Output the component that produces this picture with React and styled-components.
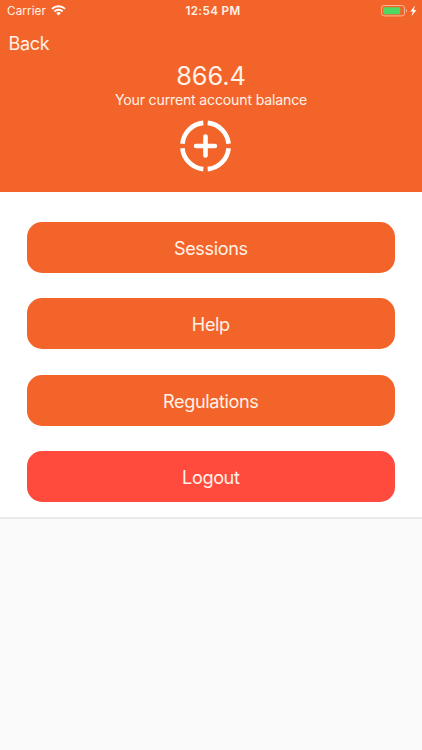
import React from 'react';
import styled, { createGlobalStyle } from 'styled-components';

const ORANGE = '#f3642b';
const RED = '#ff4b3e';

const GlobalStyle = createGlobalStyle`
  * {
    box-sizing: border-box;
  }
  body {
    margin: 0;
    background: #fafafa;
    font-family: Inter, Roboto, sans-serif;
  }
`;

const Screen = styled.div`
  width: 422px;
  height: 750px;
  overflow: hidden;
  background: #fafafa;
`;

const Header = styled.header`
  display: flex;
  flex-direction: column;
  height: 191.5px;
  background: ${ORANGE};
  color: #fff2e6;
`;

const StatusBar = styled.div`
  display: grid;
  grid-template-columns: 1fr auto 1fr;
  align-items: center;
  height: 22px;
  padding: 0 4px 0 7px;
`;

const Network = styled.div`
  display: flex;
  align-items: center;
  gap: 5px;
`;

const Carrier = styled.span`
  font-size: 11.7px;
  letter-spacing: 0.1px;
  line-height: 22px;
`;

const Clock = styled.span`
  padding-left: 1px;
  font-size: 11.6px;
  font-weight: 600;
  letter-spacing: 0.4px;
  line-height: 22px;
`;

const Power = styled.div`
  display: flex;
  align-items: center;
  justify-content: flex-end;
`;

const BackButton = styled.button`
  align-self: flex-start;
  height: 44px;
  padding: 0 8.5px;
  border: 0;
  background: none;
  color: inherit;
  font-family: inherit;
  font-size: 18px;
  letter-spacing: -0.3px;
  line-height: 44px;
`;

const Balance = styled.div`
  display: flex;
  flex-direction: column;
  align-items: center;
  margin-top: -5px;
`;

const Amount = styled.div`
  font-size: 25.4px;
  letter-spacing: -0.1px;
  line-height: 29px;
`;

const Caption = styled.div`
  padding-top: 2px;
  font-size: 14.1px;
  letter-spacing: -0.17px;
  line-height: 16px;
`;

const AddButton = styled.button`
  display: block;
  margin: 12px 11px 0 0;
  padding: 0;
  border: 0;
  background: none;
`;

const Menu = styled.nav`
  display: flex;
  flex-direction: column;
  gap: 25.4px;
  height: 327.5px;
  padding: 30.5px 27px 0 26.6px;
  border-bottom: 2px solid #ebebeb;
  background: #fff;
`;

const MenuButton = styled.button`
  flex: none;
  height: 51px;
  padding: 1px 0 0;
  border: 0;
  border-radius: 15px;
  background: ${(props) => (props.$danger ? RED : ORANGE)};
  color: #fff2e6;
  font-family: inherit;
  font-size: 18.1px;
  letter-spacing: -0.38px;
  line-height: 51px;
`;

function WifiIcon() {
  return (
    <svg width="15" height="12" viewBox="0 0 15 12" fill="none" stroke="#fff" strokeWidth="2">
      <path d="M1 3.9a9.2 9.2 0 0 1 13 0" />
      <path d="M3.4 6.5a5.8 5.8 0 0 1 8.2 0" />
      <path d="M7.5 10.4 5.2 8.1a3.3 3.3 0 0 1 4.6 0z" fill="#fff" stroke="none" />
    </svg>
  );
}

function BatteryIcon() {
  return (
    <svg width="37" height="14" viewBox="0 0 37 14">
      <rect x="0.5" y="1.5" width="23" height="10.4" rx="2.6" fill="none" stroke="#fbb793" />
      <rect x="2.2" y="3.2" width="17" height="7" rx="1.2" fill="#4fd964" />
      <path d="M25 4.9c1.3.5 1.3 3.1 0 3.6z" fill="#fbb793" />
      <path d="M34 1.6 29.3 7.4h2.6L30.6 12l4.9-6h-2.7z" fill="#fff" />
    </svg>
  );
}

function AddIcon() {
  return (
    <svg width="52" height="52" viewBox="-25.5 -26 52 52" fill="none" stroke="#fff" strokeWidth="4.6">
      <path d="M2.2-23.1A23.2 23.2 0 0 1 23.1-2.2" />
      <path d="M23.1 2.2A23.2 23.2 0 0 1 2.2 23.1" />
      <path d="M-2.2 23.1A23.2 23.2 0 0 1-23.1 2.2" />
      <path d="M-23.1-2.2A23.2 23.2 0 0 1-2.2-23.1" />
      <path d="M0-9.4V9.4M-9.4 0H9.4" strokeLinecap="round" />
    </svg>
  );
}

const menuItems = [
  { title: 'Sessions' },
  { title: 'Help' },
  { title: 'Regulations' },
  { title: 'Logout', danger: true },
];

function App() {
  return (
    <Screen>
      <GlobalStyle />
      <Header>
        <StatusBar>
          <Network>
            <Carrier>Carrier</Carrier>
            <WifiIcon />
          </Network>
          <Clock>12:54 PM</Clock>
          <Power>
            <BatteryIcon />
          </Power>
        </StatusBar>
        <BackButton>Back</BackButton>
        <Balance>
          <Amount>866.4</Amount>
          <Caption>Your current account balance</Caption>
          <AddButton aria-label="Add funds">
            <AddIcon />
          </AddButton>
        </Balance>
      </Header>
      <Menu>
        {menuItems.map((item) => (
          <MenuButton key={item.title} $danger={item.danger}>
            {item.title}
          </MenuButton>
        ))}
      </Menu>
    </Screen>
  );
}

export default App;
